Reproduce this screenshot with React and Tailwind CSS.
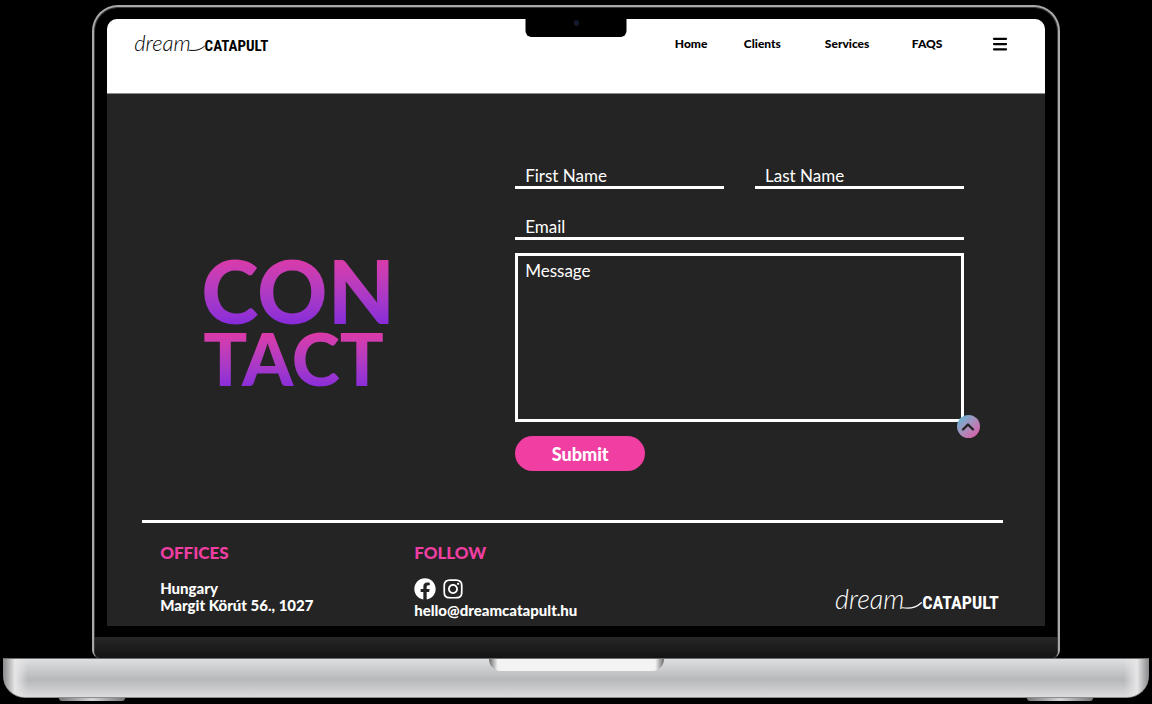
import { FaFacebook, FaInstagram } from "react-icons/fa";
import { ChevronUp, Menu } from "lucide-react";

const NAV_LINKS = ["Home", "Clients", "Services", "FAQS"];

function Logo({ large }) {
  return (
    <a href="#home" className="flex items-baseline leading-none">
      <span
        className={
          large
            ? "font-['Lato',sans-serif] text-[27px] leading-8 font-light italic"
            : "font-['Lato',sans-serif] text-[22px] leading-6 font-light italic"
        }
      >
        dream
      </span>
      <svg
        aria-hidden="true"
        viewBox="0 0 16 6"
        className={large ? "-ml-0.5 h-2 w-5" : "-ml-0.5 h-1.5 w-4"}
        fill="none"
        stroke="currentColor"
        strokeWidth="1"
        strokeLinecap="round"
      >
        <path d="M0.5 5.2C5 6 11 5.4 15.5 1.2" />
      </svg>
      <span
        className={
          large
            ? "font-['Roboto_Condensed','Liberation_Sans_Narrow',sans-serif] text-lg leading-8 font-bold"
            : "font-['Roboto_Condensed','Liberation_Sans_Narrow',sans-serif] text-[15px] leading-6 font-bold"
        }
      >
        CATAPULT
      </span>
    </a>
  );
}

function Header() {
  return (
    <header className="flex h-[75px] items-start justify-between border-b border-[#8a8a8a] bg-white pt-3 pr-[38px] pl-[27px] text-black">
      <Logo />
      <nav className="grid grid-cols-[69px_81px_87px_81px_14px] items-center text-xs leading-[26px] font-black">
        {NAV_LINKS.map((label) => (
          <a key={label} href={`#${label.toLowerCase()}`}>
            {label}
          </a>
        ))}
        <button type="button" aria-label="Open menu" className="-mx-[2px]">
          <Menu size={18} strokeWidth={3} />
        </button>
      </nav>
    </header>
  );
}

function ContactForm() {
  const line =
    "w-full min-w-0 border-b-[3px] border-white bg-transparent px-[10px] pt-1 text-[17px] leading-5 text-white outline-none placeholder:text-white placeholder:opacity-100";
  return (
    <form className="relative grid grid-cols-2 gap-x-[31px]" onSubmit={(e) => e.preventDefault()}>
      <input aria-label="First Name" placeholder="First Name" className={line} />
      <input aria-label="Last Name" placeholder="Last Name" className={line} />
      <input
        type="email"
        aria-label="Email"
        placeholder="Email"
        className={`${line} col-span-2 mt-6`}
      />
      <textarea
        aria-label="Message"
        placeholder="Message"
        className="col-span-2 mt-[13px] h-[169px] resize-none border-[3px] border-white bg-transparent px-[7px] py-[3px] text-[17px] leading-6 text-white outline-none placeholder:text-white placeholder:opacity-100"
      />
      <button
        type="submit"
        className="mt-3.5 h-[35px] w-[130px] rounded-full bg-[#f03ea2] text-lg leading-6 font-black text-white"
      >
        Submit
      </button>
      <a
        href="#home"
        aria-label="Back to top"
        className="absolute -right-4 bottom-[33px] flex size-[23px] items-center justify-center rounded-full bg-linear-to-br from-[#2fbcd8] to-[#dc4aa2] text-[#222]"
      >
        <ChevronUp size={20} strokeWidth={2.8} />
      </a>
    </form>
  );
}

function Footer() {
  return (
    <footer className="mr-[42px] ml-[35px] flex-1 border-t-[3px] border-white pr-1 pl-[18px]">
      <div className="grid grid-cols-[254px_1fr_auto] pt-5 text-[15px] leading-[17px] font-black">
        <div>
          <h2 className="text-[17px] leading-5 text-[#f03ea2]">OFFICES</h2>
          <address className="mt-[17px] not-italic">
            Hungary
            <br />
            Margit Körút 56., 1027
          </address>
        </div>
        <div>
          <h2 className="text-[17px] leading-5 text-[#f03ea2]">FOLLOW</h2>
          <div className="mt-3.5 flex items-center gap-1.5">
            <a href="#facebook" aria-label="Facebook">
              <FaFacebook size={22} />
            </a>
            <a href="#instagram" aria-label="Instagram" className="pt-px">
              <FaInstagram size={22} />
            </a>
          </div>
          <a href="mailto:hello@dreamcatapult.hu" className="block pt-0.5">
            hello@dreamcatapult.hu
          </a>
        </div>
        <div className="self-end">
          <Logo large />
        </div>
      </div>
    </footer>
  );
}

function Screen() {
  return (
    <div className="relative flex min-h-[607px] flex-col overflow-hidden rounded-t-[10px] bg-[#242424] text-white">
      <div className="absolute top-0 left-1/2 flex h-[18px] w-[101px] -translate-x-1/2 justify-center rounded-b-md bg-black">
        <span className="mt-px size-1.5 rounded-full border border-[#17171c] bg-[#101a33]" />
      </div>
      <Header />
      <main className="grid h-[426px] grid-cols-[313px_1fr] pr-[81px] pl-[94px]">
        <h1 className="pt-40 font-black">
          <span className="block w-fit bg-linear-to-b from-[#dc3aa8] from-5% to-[#8528dc] bg-clip-text text-[87px] leading-[73px] text-transparent">
            CON
          </span>
          <span className="block w-fit bg-linear-to-b from-[#dc3aa8] from-10% to-[#8528dc] bg-clip-text pl-0.5 text-[73px] leading-[63px] text-transparent">
            TACT
          </span>
        </h1>
        <div className="pl-px pt-[68px]">
          <ContactForm />
        </div>
      </main>
      <Footer />
    </div>
  );
}

export default function App() {
  return (
    <div className="min-h-screen bg-black pt-[5px] font-['Lato',sans-serif]">
      <div className="mx-[8%] rounded-t-[26px] rounded-b-lg bg-[#a8a8a8] p-[2px] pb-0">
        <div className="rounded-t-[24px] rounded-b-md border-x border-t border-[#3a3a3a] bg-black pt-[11px]">
          <div className="px-3">
            <Screen />
          </div>
          <div className="mt-[11px] h-[21px] rounded-b-md bg-linear-to-b from-[#272727] to-[#141414]" />
        </div>
      </div>
      <div className="mx-[3px]">
        <div className="flex h-10 justify-center overflow-hidden rounded-b-[22px] border border-t-[#6d6d6d] border-[#8c8c8e] bg-linear-to-b from-[#dedfe0] via-[#b7b8ba] via-55% to-[#dcdcde]">
          <div className="h-full w-6 bg-linear-to-r from-[#8f9092] via-[#e6e6e7] via-45% to-transparent" />
          <div className="flex flex-1 justify-center">
            <div className="h-3 w-[175px] rounded-b-[12px] bg-[linear-gradient(90deg,#6a6a6a,#f3f3f3_5%,#f3f3f3_95%,#6a6a6a)]" />
          </div>
          <div className="h-full w-6 bg-linear-to-l from-[#8f9092] via-[#e6e6e7] via-45% to-transparent" />
        </div>
        <div className="flex justify-between px-14">
          <div className="h-[3px] w-[66px] rounded-b-sm bg-linear-to-r from-[#77787a] via-[#d5d5d7] to-[#77787a]" />
          <div className="h-[3px] w-[66px] rounded-b-sm bg-linear-to-r from-[#77787a] via-[#d5d5d7] to-[#77787a]" />
        </div>
      </div>
    </div>
  );
}
